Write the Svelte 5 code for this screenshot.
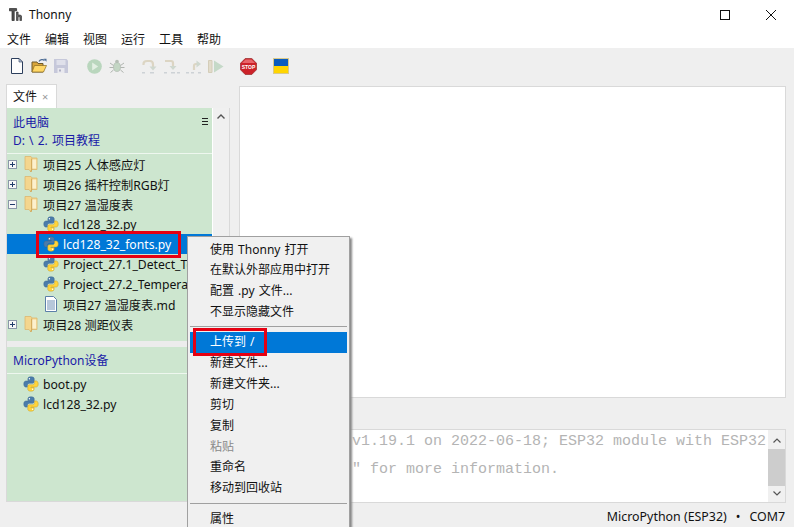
<script>
	const menus = ['文件', '编辑', '视图', '运行', '工具', '帮助'];

	const files = [
		{ name: '项目25 人体感应灯', kind: 'folder', box: '+' },
		{ name: '项目26 摇杆控制RGB灯', kind: 'folder', box: '+' },
		{ name: '项目27 温湿度表', kind: 'folder', box: '-' },
		{ name: 'lcd128_32.py', kind: 'py', child: true },
		{ name: 'lcd128_32_fonts.py', kind: 'py', child: true, selected: true },
		{ name: 'Project_27.1_Detect_Temperature.py', kind: 'py', child: true },
		{ name: 'Project_27.2_Temperature.py', kind: 'py', child: true },
		{ name: '项目27 温湿度表.md', kind: 'doc', child: true },
		{ name: '项目28 测距仪表', kind: 'folder', box: '+' }
	];

	const contextItems = [
		{ label: '使用 Thonny 打开' },
		{ label: '在默认外部应用中打开' },
		{ label: '配置 .py 文件...' },
		{ label: '不显示隐藏文件' },
		{ sep: true },
		{ label: '上传到 /', active: true },
		{ label: '新建文件...' },
		{ label: '新建文件夹...' },
		{ label: '剪切' },
		{ label: '复制' },
		{ label: '粘贴', disabled: true },
		{ label: '重命名' },
		{ label: '移动到回收站' },
		{ sep: true, tall: true },
		{ label: '属性' }
	];
</script>

{#snippet pyIcon()}
	<svg class="ico" viewBox="0 0 16 16">
		<path fill="#4b7cab" stroke="#3a6690" stroke-width=".5" d="M8 .8C5.600.8 4.900 1.700 4.900 3v1.500h3.300V5H3C1.700 5 .8 6 .8 8s.9 3.100 2.100 3.100h1.500V9.300c0-1.200 1-2.100 2.100-2.100h3.100c1 0 1.600-.7 1.600-1.600V3C11.300 1.700 10.300.8 8 .8z" />
		<path fill="#ffd43b" stroke="#c9a227" stroke-width=".5" transform="rotate(180 8 8)" d="M8 .8C5.600.8 4.900 1.700 4.900 3v1.500h3.300V5H3C1.700 5 .8 6 .8 8s.9 3.100 2.100 3.100h1.500V9.300c0-1.200 1-2.100 2.100-2.100h3.100c1 0 1.600-.7 1.600-1.600V3C11.300 1.700 10.300.8 8 .8z" />
		<circle cx="6.400" cy="2.800" r=".7" fill="#fff" />
		<circle cx="9.600" cy="13.200" r=".7" fill="#fff" />
	</svg>
{/snippet}

{#snippet folderIcon()}
	<svg class="ico folder" viewBox="0 0 16 18">
		<path fill="#f4d68e" stroke="#dcb870" stroke-width=".8" d="M2 1.500h6l1 1.500h5v11.500H8.500L8 17l-2-2.500H2z" />
		<path fill="#fcf0cd" d="M9 4.500h4.200v9H9z" />
		<path fill="none" stroke="#c99f50" stroke-width=".9" d="M8.700 3.500v11L7.800 17" />
	</svg>
{/snippet}

{#snippet docIcon()}
	<svg class="ico" viewBox="0 0 16 16">
		<path fill="#fff" stroke="#5b7fa8" d="M2.500.5h8l3 3v12h-11z" />
		<path fill="none" stroke="#6f8fb5" d="M4 5h8M4 7h8M4 9h8M4 11h8M4 13h8" />
	</svg>
{/snippet}

<div class="window">
	<div class="titlebar">
		<svg class="app-logo" viewBox="0 0 13 13">
			<path fill="#555" stroke="#222" stroke-width=".7" d="M.4.600h7.200v2.200H5.200v9.800H3V2.800H.4z" />
			<path fill="#666" stroke="#222" stroke-width=".6" d="M7.500 4h1.600v3h2.400l1 1v4.600h-1.600V8.700H9.100v3.900H7.500z" />
		</svg>
		<span class="title">Thonny</span>
		<div class="win-controls">
			<svg class="win-btn" viewBox="0 0 10 10"><rect x=".5" y=".5" width="9" height="9" fill="none" stroke="#111" /></svg>
			<svg class="win-btn" viewBox="0 0 10 10"><path d="M0 0l10 10M10 0L0 10" stroke="#111" fill="none" /></svg>
		</div>
	</div>

	<nav class="menubar">
		{#each menus as m}
			<span>{m}</span>
		{/each}
	</nav>

	<div class="toolbar">
		<svg class="tool t-new" viewBox="0 0 12 16">
			<path fill="#fdfdfd" stroke="#2c3e5c" d="M.5.500h7.500l3.500 3.500v11.500H.5z" />
			<path fill="#b9c6dc" stroke="#2c3e5c" stroke-width=".6" d="M8 .5V4h3.500z" />
		</svg>
		<svg class="tool t-open" viewBox="0 0 16 16">
			<path fill="#d9a53a" stroke="#6d5a2c" d="M1 4h5l1 1.500h5V14H1z" />
			<path fill="#ffd766" stroke="#8a6a20" stroke-width=".7" d="M1 14l2.500-6.500H15.500L12.500 14z" />
			<path fill="none" stroke="#4c6b94" stroke-width="1.300" d="M8 3.500C9 1.500 12 1 13.500 2.500" />
			<path fill="#4c6b94" d="M12.500.8h3v3z" />
		</svg>
		<svg class="tool t-save" viewBox="0 0 14 14">
			<path fill="#c6c8da" d="M0 0h12.500L14 1.500V14H0z" />
			<path fill="#dfe0ea" d="M2.500 1h9v5h-9z" />
			<path fill="#e9e9ef" d="M3.500 9h7v5h-7z" />
			<path fill="#aeb0c4" d="M5 10.500h2v2H5z" />
		</svg>
		<svg class="tool t-run" viewBox="0 0 15 15">
			<circle cx="7.500" cy="7.500" r="7.300" fill="#b9d6bd" />
			<path fill="#e3efe3" d="M5.200 3.500v8l6-4z" />
		</svg>
		<svg class="tool t-bug" viewBox="0 0 16 16">
			<ellipse cx="8" cy="9" rx="3.500" ry="4.500" fill="#c3d6c4" stroke="#aab3aa" stroke-width=".6" />
			<circle cx="8" cy="3.500" r="1.800" fill="#b5beb5" />
			<path fill="none" stroke="#b0b5b0" d="M1 5l3.500 2.500M15 5l-3.500 2.500M.5 9.500h4M15.500 9.500h-4M1.500 14.500l3-2.500M14.500 14.500l-3-2.500" />
		</svg>
		<svg class="tool t-over" viewBox="0 0 16 15">
			<path fill="none" stroke="#dcd5c3" stroke-width="2.200" d="M1.500 6V5C1.500 3 3 2 5 2h3c2 0 3 1 3 3.500v2.500" />
			<path fill="#cfd8cf" d="M7.500 7.500h7L11 11.500z" />
			<path fill="#cdd2d6" d="M0 13h3v1.500H0zM8 13h4v1.500H8z" />
		</svg>
		<svg class="tool t-into" viewBox="0 0 16 15">
			<path fill="none" stroke="#dcd5c3" stroke-width="2.200" d="M1 2h6c1.500 0 2 .8 2 2v4" />
			<path fill="#cfd8cf" d="M5.500 7h7L9 11z" />
			<path fill="#cdd2d6" d="M0 13h3v1.500H0zM7 13h4v1.500H7zM13 13h3v1.500h-3z" />
		</svg>
		<svg class="tool t-out" viewBox="0 0 16 15">
			<path fill="none" stroke="#dcd5c3" stroke-width="2.200" d="M8 11V7c0-1.500.8-2 2-2h1" />
			<path fill="#cfd8cf" d="M10.500 1.500v7L15 5z" />
			<path fill="#cdd2d6" d="M0 13h3v1.500H0zM5 13h3v1.500H5zM12 13h3v1.500h-3z" />
		</svg>
		<svg class="tool t-resume" viewBox="0 0 16 15">
			<path fill="#e2dccb" stroke="#d4cdb9" d="M.5 1.500h3.500v12H.5z" />
			<path fill="#c5d9c8" d="M6 1.500v12L15.500 7.500z" />
		</svg>
		<svg class="tool t-stop" viewBox="0 0 17 17">
			<path fill="#cc2229" stroke="#8c1a1a" stroke-width=".6" d="M5.200.5h6.600l4.700 4.700v6.600l-4.700 4.700H5.200L.5 11.800V5.200z" />
			<path fill="#e8666a" d="M5.500 1.500h6l3.500 3.500H2z" />
			<text class="stop-text" x="8.500" y="10.600" text-anchor="middle">STOP</text>
		</svg>
		<div class="tool t-flag"></div>
	</div>

	<div class="workspace">
		<aside class="sidebar">
			<div class="tab">文件<span class="tab-x">×</span></div>
			<div class="panel">
				<section class="pane upper">
					<div class="tree-wrap">
						<header class="pane-head">
							<div class="crumb">此电脑</div>
							<div class="crumb">D: \ 2. 项目教程</div>
							<span class="burger"></span>
						</header>
						<ul class="tree">
							{#each files as f}
								<li class:selected={f.selected} class:child={f.child}>
									{#if f.box}
										<span class="box">
											<i class="h"></i>
											{#if f.box === '+'}<i class="v"></i>{/if}
										</span>
									{/if}
									{#if f.kind === 'py'}
										{@render pyIcon()}
									{:else if f.kind === 'doc'}
										{@render docIcon()}
									{:else}
										{@render folderIcon()}
									{/if}
									<span class="fname">{f.name}</span>
								</li>
							{/each}
						</ul>
					</div>
					<div class="vscroll">
						<svg class="arrow" viewBox="0 0 8 5"><path d="M.5 4.500L4 1l3.500 3.500" fill="none" stroke="#555" stroke-width="1.400" /></svg>
					</div>
				</section>
				<div class="sash"></div>
				<section class="pane lower">
					<header class="pane-head device">
						<div class="crumb">MicroPython设备</div>
					</header>
					<ul class="tree">
						<li>{@render pyIcon()}<span class="fname">boot.py</span></li>
						<li>{@render pyIcon()}<span class="fname">lcd128_32.py</span></li>
					</ul>
				</section>
			</div>
		</aside>

		<main class="right">
			<div class="editor"></div>
			<div class="shell">
				<pre class="shell-text">MicroPython v1.19.1 on 2022-06-18; ESP32 module with ESP32
Type "help()" for more information.</pre>
				<div class="shell-scroll">
					<svg class="arrow" viewBox="0 0 8 5"><path d="M.5 4.500L4 1l3.500 3.500" fill="none" stroke="#555" stroke-width="1.200" /></svg>
					<div class="thumb"></div>
					<svg class="arrow" viewBox="0 0 8 5"><path d="M.5.5L4 4l3.500-3.500" fill="none" stroke="#555" stroke-width="1.200" /></svg>
				</div>
			</div>
		</main>
	</div>

	<footer class="status"><span>MicroPython (ESP32)</span><span>•</span><span>COM7</span></footer>

	<div class="context-menu">
		{#each contextItems as item}
			{#if item.sep}
				<div class="sep" class:tall={item.tall}></div>
			{:else}
				<div class="item" class:active={item.active} class:disabled={item.disabled}>{item.label}</div>
			{/if}
		{/each}
	</div>

	<div class="mark mark-file"></div>
	<div class="mark mark-upload"></div>
</div>

<style>
	:global(body) {
		margin: 0;
	}

	.window {
		position: relative;
		width: 794px;
		height: 527px;
		overflow: hidden;
		display: flex;
		flex-direction: column;
		background: #efefef;
		font-family: "Noto Sans", "Noto Sans CJK SC", sans-serif;
		font-size: 12px;
		color: #111;
	}

	.titlebar {
		height: 29px;
		background: #fff;
		display: flex;
		align-items: center;
		padding-left: 9px;
		flex: none;
	}

	.app-logo {
		width: 13px;
		height: 13px;
	}

	.title {
		margin-left: 7px;
	}

	.win-controls {
		margin-left: auto;
		display: flex;
		align-items: center;
		gap: 36px;
		padding-right: 18px;
	}

	.win-btn {
		width: 10px;
		height: 10px;
	}

	.menubar {
		height: 19px;
		background: #fff;
		display: flex;
		align-items: center;
		gap: 14px;
		padding: 2px 0 0 7px;
		box-sizing: border-box;
		flex: none;
		line-height: 17px;
	}

	.toolbar {
		height: 35px;
		flex: none;
		display: flex;
		align-items: center;
		padding: 1px 0 0 11px;
		box-sizing: border-box;
	}

	.tool {
		flex: none;
		display: block;
	}

	.t-new { width: 12px; height: 16px; }
	.t-open { width: 16px; height: 16px; margin-left: 8px; }
	.t-save { width: 14px; height: 14px; margin-left: 7px; }
	.t-run { width: 15px; height: 15px; margin-left: 19px; }
	.t-bug { width: 16px; height: 16px; margin-left: 7px; }
	.t-over { width: 16px; height: 15px; margin-left: 17px; }
	.t-into { width: 16px; height: 15px; margin-left: 6px; }
	.t-out { width: 16px; height: 15px; margin-left: 6px; }
	.t-resume { width: 16px; height: 15px; margin-left: 6px; }
	.t-stop { width: 17px; height: 17px; margin-left: 16px; }

	.stop-text {
		font-family: "Liberation Sans", sans-serif;
		font-size: 5px;
		font-weight: 700;
		fill: #fff;
	}

	.t-flag {
		width: 16px;
		height: 16px;
		margin-left: 16px;
		background: linear-gradient(#0a5cbe 50%, #ffd500 50%);
		outline: 1px solid #d9c98a;
		outline-offset: -1px;
	}

	.workspace {
		flex: 1;
		display: flex;
		min-height: 0;
	}

	.sidebar {
		width: 224px;
		margin-left: 6px;
		display: flex;
		flex-direction: column;
		flex: none;
	}

	.tab {
		width: 51px;
		height: 24px;
		flex: none;
		margin-top: 1px;
		background: #fff;
		border: 1px solid #d9d9d9;
		border-bottom: none;
		padding-left: 6px;
		box-sizing: border-box;
		line-height: 24px;
	}

	.tab-x {
		color: #999;
		margin-left: 5px;
		font-size: 11px;
	}

	.panel {
		height: 394px;
		flex: none;
		display: flex;
		flex-direction: column;
		border: 1px solid #d9d9d9;
		border-top: none;
		box-sizing: border-box;
		background: #cde6cf;
	}

	.pane.upper {
		height: 233px;
		display: flex;
		flex: none;
	}

	.tree-wrap {
		flex: 1;
		min-width: 0;
	}

	.vscroll {
		width: 17px;
		background: #f0f0f0;
		border-left: 1px solid #fff;
		box-sizing: border-box;
		flex: none;
		padding-top: 6px;
	}

	.arrow {
		display: block;
		width: 8px;
		height: 5px;
		margin: 0 auto;
	}

	.pane-head {
		position: relative;
		height: 46px;
		padding: 6px 0 0 6px;
		box-sizing: border-box;
		border-bottom: 1px solid #eef7ef;
		color: #1a1aa8;
		line-height: 18px;
		word-spacing: 1px;
	}

	.pane-head.device {
		height: 27px;
		padding-top: 5px;
	}

	.burger {
		position: absolute;
		right: 4px;
		top: 10px;
		width: 6px;
		height: 5px;
		border-top: 1px solid #222;
		border-bottom: 1px solid #222;
		background: linear-gradient(#222, #222) center / 100% 1px no-repeat;
	}

	.tree {
		list-style: none;
		margin: 0;
		padding: 0;
		font-size: 12.200px;
	}

	.tree li {
		height: 20px;
		display: flex;
		align-items: center;
		padding-left: 16px;
		white-space: nowrap;
		overflow: hidden;
		position: relative;
	}

	.tree li.child {
		padding-left: 36px;
	}

	.tree li.selected {
		background: #0078d7;
		color: #fff;
	}

	.fname {
		padding-top: 1px;
	}

	.ico {
		width: 16px;
		height: 16px;
		flex: none;
		margin-right: 4px;
	}

	.ico.folder {
		height: 18px;
	}

	.box {
		position: absolute;
		left: 1px;
		top: 6px;
		width: 9px;
		height: 9px;
		box-sizing: border-box;
		border: 1px solid #8a96a8;
		background: #f7f7f7;
	}

	.box i {
		position: absolute;
		background: #1f3a6a;
	}

	.box .h { left: 1px; top: 3px; width: 5px; height: 1px; }
	.box .v { left: 3px; top: 1px; width: 1px; height: 5px; }

	.sash {
		height: 6px;
		background: #ececec;
		flex: none;
	}

	.pane.lower {
		flex: 1;
	}

	.right {
		flex: 1;
		display: flex;
		flex-direction: column;
		margin-left: 9px;
		margin-right: 8px;
		min-width: 0;
	}

	.editor {
		height: 312px;
		flex: none;
		margin-top: 3px;
		background: #fff;
		border: 1px solid #d9d9d9;
		box-sizing: border-box;
	}

	.shell {
		height: 74px;
		flex: none;
		margin-top: 31px;
		display: flex;
		background: #fff;
		border: 1px solid #d9d9d9;
		box-sizing: border-box;
	}

	.shell-text {
		flex: 1;
		min-width: 0;
		margin: -2px 0 0;
		padding: 0 0 0 4px;
		overflow: hidden;
		font-family: "Liberation Mono", monospace;
		font-size: 15px;
		line-height: 28px;
		color: #b4b4b4;
	}

	.shell-scroll {
		width: 17px;
		flex: none;
		background: #f0f0f0;
		display: flex;
		flex-direction: column;
		align-items: center;
		justify-content: space-between;
		padding: 8px 0 6px;
		box-sizing: border-box;
	}

	.thumb {
		align-self: stretch;
		flex: 1;
		margin: 6px 0 5px;
		background: #cdcdcd;
	}

	.status {
		position: absolute;
		right: 9px;
		bottom: 1px;
		display: flex;
		gap: 9px;
		line-height: 18px;
		font-size: 12.400px;
	}

	.context-menu {
		position: absolute;
		left: 187px;
		top: 236px;
		width: 163px;
		height: 300px;
		box-sizing: border-box;
		padding: 2.500px 2px;
		background: #f0f0f0;
		border: 1px solid #a0a0a0;
		box-shadow: 2px 2px 2px #888;
	}

	.item {
		height: 20.900px;
		line-height: 20.900px;
		padding-left: 20px;
		white-space: nowrap;
		word-spacing: 1px;
	}

	.item.active {
		background: #0078d7;
		color: #fff;
	}

	.item.disabled {
		color: #8a8a8a;
	}

	.sep {
		height: 1px;
		background: #a0a0a0;
		margin: 3px 0 5px;
	}

	.sep.tall {
		margin-top: 4px;
	}

	.mark {
		position: absolute;
		border: 3px solid #e60012;
		box-sizing: border-box;
	}

	.mark-file {
		left: 36px;
		top: 231px;
		width: 145px;
		height: 27px;
	}

	.mark-upload {
		left: 193px;
		top: 328px;
		width: 74px;
		height: 28px;
	}
</style>
